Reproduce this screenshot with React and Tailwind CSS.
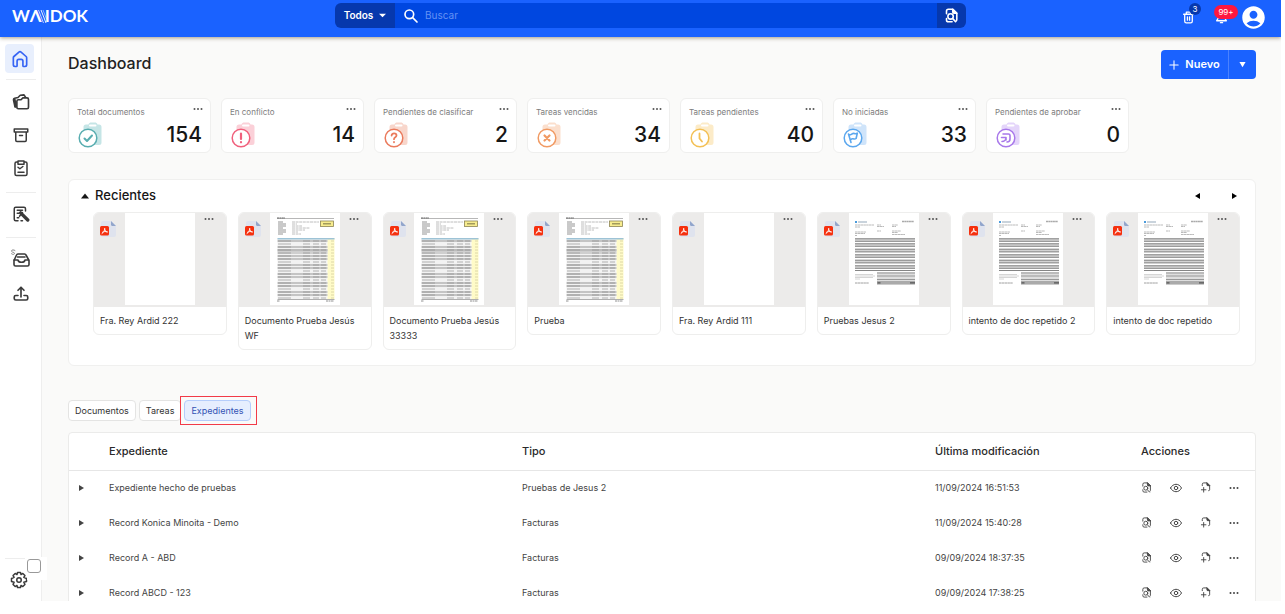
import React from 'react';
import { MdAccountCircle } from 'react-icons/md';

const STATS = [
  { label: 'Total documentos', value: 154, soft: '#c5e5e6', strong: '#58adb0', glyph: 'check' },
  { label: 'En conflicto', value: 14, soft: '#fbd0d8', strong: '#f0607c', glyph: 'alert' },
  { label: 'Pendientes de clasificar', value: 2, soft: '#f8d6cb', strong: '#ea7a5c', glyph: 'question' },
  { label: 'Tareas vencidas', value: 34, soft: '#fbdfcd', strong: '#f19a63', glyph: 'cross' },
  { label: 'Tareas pendientes', value: 40, soft: '#fcebc8', strong: '#f3c055', glyph: 'clock' },
  { label: 'No iniciadas', value: 33, soft: '#cfe4fa', strong: '#5ba7ee', glyph: 'flag' },
  { label: 'Pendientes de aprobar', value: 0, soft: '#e4d5fa', strong: '#a878ea', glyph: 'approve' },
];

const RECENTS = [
  { title: 'Fra. Rey Ardid 222', preview: 'blank' },
  { title: 'Documento Prueba Jesús WF', preview: 'order' },
  { title: 'Documento Prueba Jesús 33333', preview: 'order' },
  { title: 'Prueba', preview: 'order' },
  { title: 'Fra. Rey Ardid 111', preview: 'blank' },
  { title: 'Pruebas Jesus 2', preview: 'invoice' },
  { title: 'intento de doc repetido 2', preview: 'invoice' },
  { title: 'intento de doc repetido', preview: 'invoice' },
];

const RECORDS = [
  { name: 'Expediente hecho de pruebas', type: 'Pruebas de Jesus 2', modified: '11/09/2024 16:51:53' },
  { name: 'Record Konica Minoita - Demo', type: 'Facturas', modified: '11/09/2024 15:40:28' },
  { name: 'Record A - ABD', type: 'Facturas', modified: '09/09/2024 18:37:35' },
  { name: 'Record ABCD - 123', type: 'Facturas', modified: '09/09/2024 17:38:25' },
];

const GLYPHS = {
  check: <path d="M7.500 16.500l2.500 2.500 5-5.500" strokeWidth="2" />,
  alert: <path d="M11 11.500v5.500M11 20v.3" strokeWidth="2.2" />,
  question: <path d="M8.600 13.600c0-3 4.900-2.900 4.900 0 0 1.800-2.500 1.700-2.500 3.600M11 20v.3" strokeWidth="1.800" />,
  cross: <path d="M8.500 13.500l5 5M13.500 13.500l-5 5" strokeWidth="2.200" />,
  clock: <path d="M10.500 11.500v5l2.500 3" strokeWidth="1.800" />,
  flag: <path d="M6.500 12l2.500 8.500M6.800 12.500c2 1.500 3.500-2 5.500-1 1 .5 2 .3 3-.3l-1.200 5.300c-1 .8-2 .6-3 .3-1.500-.3-2 .5-3 1.200" strokeWidth="1.600" />,
  approve: <path d="M8 12h5.500a1.500 1.500 0 0 1 1.500 1.500V17a3 3 0 0 1-3 3M6.500 15.500H11V18M11 15.500c0 2-1.500 4-4 4" strokeWidth="1.600" />,
};

function Dots({ className = '' }) {
  return (
    <svg viewBox="0 0 10 4" className={`w-2.5 h-1 ${className}`} fill="currentColor">
      <circle cx="1.5" cy="2" r="1" />
      <circle cx="5" cy="2" r="1" />
      <circle cx="8.5" cy="2" r="1" />
    </svg>
  );
}

function Triangle({ points, className = 'w-2 h-2' }) {
  return (
    <svg viewBox="0 0 8 8" className={className} fill="currentColor">
      <polygon points={points} />
    </svg>
  );
}

function Stroke({ children, className = 'w-[18px] h-[18px]', width = 2 }) {
  return (
    <svg viewBox="0 0 24 24" className={className} fill="none" stroke="currentColor" strokeWidth={width} strokeLinecap="round" strokeLinejoin="round">
      {children}
    </svg>
  );
}

function PageSearchIcon({ className, width }) {
  return (
    <Stroke className={className} width={width}>
      <path d="M4 9V5a3 3 0 0 1 3-3h7l6.500 6.500V18a3 3 0 0 1-1 2.500" />
      <path d="M14 2v4.500a2 2 0 0 0 2 2h4.500z" fill="currentColor" />
      <circle cx="10.500" cy="13.500" r="4.300" />
      <path d="M14 17l4.500 5M4 17v2a3 3 0 0 0 3 3h6" />
    </Stroke>
  );
}

function StatIcon({ soft, strong, glyph }) {
  return (
    <svg viewBox="0 0 26 26" className="w-[26px] h-[26px]" fill="none">
      <path d="M9 2.500h2.500C12 1 13 .5 14 .5h4c1 0 2 .5 2.500 2H22a2.500 2.500 0 0 1 2.500 2.500v15.500A2.500 2.500 0 0 1 22 23H9a2.500 2.500 0 0 1-2.500-2.500V5A2.500 2.500 0 0 1 9 2.500z" fill={soft} />
      <rect x="12" y="2.500" width="7.500" height="2" rx="1" fill="#fff" />
      <circle cx="11" cy="16" r="8.800" fill="#fff" stroke={strong} strokeWidth="1.500" />
      <g stroke={strong} strokeLinecap="round" strokeLinejoin="round">{GLYPHS[glyph]}</g>
    </svg>
  );
}

function PdfIcon() {
  return (
    <svg viewBox="0 0 16 18" className="w-4 h-[18px]">
      <path d="M3 1h8l5 5v9a2 2 0 0 1-2 2H3a2 2 0 0 1-2-2V3a2 2 0 0 1 2-2z" fill="#dfe3ee" />
      <path d="M11 1l5 5h-3.500A1.500 1.500 0 0 1 11 4.500z" fill="#92a6cc" />
      <rect x="0" y="6" width="9" height="9.500" rx="1.500" fill="#f5300f" />
      <path d="M2 13.500c1.800-1 2.700-3 2.700-5.200C4.700 10.500 5.500 12 7.300 12M2.500 12.200c1.300-.7 3-.9 4.600-.4" stroke="#fff" strokeWidth=".9" fill="none" strokeLinecap="round" />
    </svg>
  );
}

function OrderPreview() {
  return (
    <svg viewBox="0 0 70 92" className="w-full h-full">
      <path d="M7 5.500h57" stroke="#a4a4a4" strokeWidth=".8" />
      <path d="M7 5h8" stroke="#666" strokeWidth="1" strokeDasharray="2 .4" />
      {[9, 11, 13, 15, 17, 19, 21].map((y, i) => (
        <g key={y} stroke="#888" strokeWidth=".9">
          <path d={`M8 ${y}h${i % 3 === 0 ? 5 : 8}`} />
          <path d={`M22 ${y}h${[27, 5, 10, 18, 13, 6, 9][i]}`} strokeDasharray="3 .6" strokeOpacity=".6" />
        </g>
      ))}
      <rect x="50.500" y="8" width="13" height="5.500" fill="#f7ec8e" stroke="#8c8454" strokeWidth=".8" />
      <path d="M53 10.800h8" stroke="#a29a5c" strokeWidth="1.500" />
      <rect x="7.500" y="25" width="50" height="61" fill="#f2f2f2" />
      <rect x="57.500" y="25" width="7" height="61" fill="#fffbc8" />
      <path d="M7.500 25.800h57" stroke="#9dc3d6" strokeWidth="1.600" />
      <rect x="7.500" y="36" width="50" height="5" fill="#cfcfcf" />
      {Array.from({ length: 20 }, (_, i) => 28 + i * 3).map((y, i) => (
        <g key={y}>
          {i % 3 !== 1 && <path d={`M7.500 ${y}h50`} stroke="#b4b4b4" strokeWidth="1.400" />}
          <path d={`M8 ${y}h13M33 ${y}h7M43 ${y}h6M51 ${y}h5`} stroke="#8c8c8c" strokeWidth=".8" strokeOpacity=".8" />
          <path d={`M61 ${y}h3`} stroke="#d4cfa0" strokeWidth=".8" />
        </g>
      ))}
      <path d="M7.500 86.500h57" stroke="#999" strokeWidth=".8" />
      <path d="M7 88h3M56 88h8" stroke="#777" strokeWidth=".8" strokeDasharray="2 .5" />
    </svg>
  );
}

function InvoicePreview() {
  return (
    <svg viewBox="0 0 70 92" className="w-full h-full">
      <rect x="6" y="8" width="2" height="2" fill="#4a9bdc" />
      <path d="M9 9h9" stroke="#93a8ba" strokeWidth="1.200" />
      <path d="M53 8.500h12" stroke="#aaa" strokeWidth="1.300" strokeDasharray="2 .3" />
      <path d="M6 12h19M28 12h4M28 13.500h7M43 12h6M43 13.500h4M6 14h5M28 18h4M6 19h11M6 20.500h10M43 18h9M43 19.500h6M43 21.500h13M6 22.500h2" stroke="#aaa" strokeWidth=".8" strokeDasharray="2.500 .3" />
      {[26, 31, 36.500, 42, 47.500, 53].map((y) => (
        <g key={y}>
          <rect x="6" y={y - 1} width="60" height="4" fill="#d3d3d3" />
          <path d={`M6 ${y - .2}h60M6 ${y + 2.300}h60`} stroke="#858585" strokeWidth=".9" />
        </g>
      ))}
      <path d="M6 57.500h60" stroke="#777" strokeWidth=".9" />
      <rect x="28" y="59" width="38" height="12.500" fill="#dedede" />
      <path d="M28 60h38M28 63h38M28 66.500h38" stroke="#909090" strokeWidth=".9" />
      <rect x="28" y="68" width="38" height="3.500" fill="#aaa" />
      <path d="M28.500 69.800h3M61 69.800h5" stroke="#555" strokeWidth="1.200" />
      <path d="M6 61.500h18M6 63h20M6 64.500h18M6 66h5" stroke="#ccc" strokeWidth=".8" />
      <path d="M6 70h14" stroke="#a0a0a0" strokeWidth="1" strokeDasharray="2.500 .3" />
    </svg>
  );
}

function StatCard({ stat }) {
  return (
    <article className="w-[143px] h-[55px] shrink-0 rounded-md border border-[#efefee] bg-white px-2">
      <div className="flex items-start justify-between">
        <h2 className="pt-[7px] text-[8px] leading-3 text-[#7d7d7d]">{stat.label}</h2>
        <button aria-label="Opciones" className="pt-2 text-[#555]"><Dots className="-mr-px" /></button>
      </div>
      <div className="mt-1 flex items-center justify-between">
        <StatIcon soft={stat.soft} strong={stat.strong} glyph={stat.glyph} />
        <span className="text-[21px] leading-6 font-medium text-[#161616]">{stat.value}</span>
      </div>
    </article>
  );
}

function RecentCard({ doc }) {
  return (
    <article className="flex-1 min-w-0 overflow-hidden rounded-md border border-[#eeeeed] bg-white">
      <div className="relative flex h-[94px] justify-center bg-[#ecebea]">
        <div className="h-[92px] w-[70px] bg-white">
          {doc.preview === 'order' && <OrderPreview />}
          {doc.preview === 'invoice' && <InvoicePreview />}
        </div>
        <div className="absolute left-1.5 top-[7px]"><PdfIcon /></div>
        <button aria-label="Opciones" className="absolute right-3 top-1 text-[#555] flex"><Dots /></button>
      </div>
      <h3 className="px-1.5 pt-[6px] pb-[6px] text-[9px] leading-[15px] text-[#333]">{doc.title}</h3>
    </article>
  );
}

function Sidebar() {
  return (
    <nav className="relative flex w-[42px] shrink-0 flex-col border-r border-[#eeeeee] bg-white text-[#3a3a3a]">
      <a href="#inicio" aria-label="Inicio" className="ml-[5px] mt-[7px] flex size-[29px] items-center justify-center rounded bg-[#e8effd] text-[#3664f4]">
        <Stroke className="size-5" width={2}>
          <path d="M4 10.500a2 2 0 0 1 .7-1.500l6-5.300a2 2 0 0 1 2.600 0l6 5.300a2 2 0 0 1 .7 1.500V19a2 2 0 0 1-2 2h-1.500a1 1 0 0 1-1-1v-5.500a2 2 0 0 0-2-2h-3a2 2 0 0 0-2 2V20a1 1 0 0 1-1 1H6a2 2 0 0 1-2-2z" />
        </Stroke>
      </a>
      <hr className="ml-1.5 mt-1.5 w-[30px] border-[#ededed]" />
      <div className="flex flex-col gap-[15px] pl-3 pt-[13px]">
        <a href="#carpetas" aria-label="Carpetas">
          <Stroke width={2.2}>
            <path d="M6.500 11a2 2 0 0 1 2-2h3.500l2.500-2.500H20a2 2 0 0 1 2 2V19a2 2 0 0 1-2 2H8.500a2 2 0 0 1-2-2z" />
            <path d="M4 18.500L2 9a2 2 0 0 1 1.500-2L8 6l3-3 5-.5 2 3" />
            <path d="M3.500 9l1.500 9" strokeWidth="3" />
          </Stroke>
        </a>
        <a href="#archivo" aria-label="Archivo">
          <Stroke>
            <path d="M3 4h18v4H3zM5 8v11a1.500 1.500 0 0 0 1.500 1.500h11A1.500 1.500 0 0 0 19 19V8M10 12.500h4" />
          </Stroke>
        </a>
        <a href="#tareas" aria-label="Tareas">
          <Stroke>
            <path d="M8 4H6a2 2 0 0 0-2 2v14a2 2 0 0 0 2 2h12a2 2 0 0 0 2-2V6a2 2 0 0 0-2-2h-2M8 2.500h8V7H8z" />
            <path d="M8 11l2.500 2 4-3M8 17.500h8" />
          </Stroke>
        </a>
      </div>
      <hr className="ml-1.5 mt-[15px] w-[30px] border-[#ededed]" />
      <a href="#revision" aria-label="Revisión" className="ml-3 mt-3">
        <Stroke>
          <path d="M8 21H5a2 2 0 0 1-2-2V5a2 2 0 0 1 2-2h11a2 2 0 0 1 2 2v3M7 7h7M7 11h2M7 17h2M12 21h2" />
          <path d="M11.500 10.500L21 20" strokeWidth="4.500" />
          <path d="M10 15l4-5" />
        </Stroke>
      </a>
      <hr className="ml-1.5 mt-[14px] w-[30px] border-[#ededed]" />
      <a href="#bandeja" aria-label="Bandeja" className="ml-2 mt-2.5">
        <svg viewBox="0 0 24 22" className="h-[22px] w-6" fill="none" stroke="currentColor" strokeWidth="1.600" strokeLinecap="round" strokeLinejoin="round">
          <path d="M6 12.500l2.500-5.500a1.500 1.500 0 0 1 1.500-1h6.500a1.500 1.500 0 0 1 1.500 1l3 5.500v4A1.500 1.500 0 0 1 19.500 18h-12A1.500 1.500 0 0 1 6 16.500z" />
          <path d="M6 12h4c.5 3 6.500 3 7 0h3.500M9.500 9h7.500" />
          <path d="M7 2.500c-1.500-1.200-4-.5-3.500.8.5 1.200 3 .7 3 2.200 0 1-2 1.300-3 .3" strokeWidth="1" stroke="#888" />
        </svg>
      </a>
      <a href="#subir" aria-label="Subir" className="ml-3 mt-[15px]">
        <Stroke width={2.2}>
          <path d="M12 16V3M8 7l4-4 4 4M8 14H5a2 2 0 0 0-2 2v2a2 2 0 0 0 2 2h14a2 2 0 0 0 2-2v-2a2 2 0 0 0-2-2h-3" />
        </Stroke>
      </a>
      <hr className="ml-[5px] mt-auto w-5 border-[#ededed]" />
      <a href="#ajustes" aria-label="Ajustes" className="ml-2.5 mt-3 mb-3">
        <Stroke>
          <path d="M10 2h4l.7 2.700 2.400-1.400 2.800 2.800-1.500 2.400L22 10v4l-3.600 1 1.500 2.900-2.800 2.800-2.400-1.400L14 22h-4l-.7-2.700-2.400 1.400-2.800-2.800L5.500 15 2 14v-4l3.500-1.500-1.400-2.400 2.800-2.800 2.400 1.400z" />
          <circle cx="12" cy="12" r="3" />
        </Stroke>
      </a>
      {/* Pin toggle hangs over the sidebar edge */}
      <label className="absolute bottom-[21px] left-[27px] z-10 flex h-[23px] w-5 items-start bg-white pt-0.5">
        <input type="checkbox" aria-label="Fijar menú" className="size-3.5 appearance-none rounded-[3px] border border-[#999] bg-white" />
      </label>
    </nav>
  );
}

function Header() {
  return (
    <header className="relative z-20 flex h-[37px] shrink-0 bg-[#1a62ff] text-white shadow-[0_1px_4px_rgba(60,40,0,0.45)]">
      <a href="#inicio" aria-label="Waidok" className="flex h-8 w-[335px] shrink-0 items-center pl-3 font-['Lato',sans-serif] text-[17px] font-bold">
        <span>WΛ</span>
        <svg viewBox="0 0 9 13" className="-ml-1 h-[13px] w-[9px]" fill="none" stroke="#fff">
          <path d="M.5 0l5 13" strokeWidth=".7" />
          <path d="M3 0l5 13" strokeWidth=".9" />
          <path d="M5 0l3.500 9" strokeWidth=".5" />
        </svg>
        <span className="-ml-0.5">IDOK</span>
      </a>
      <form className="mt-[3px] flex h-[25px] flex-1" onSubmit={e => e.preventDefault()}>
        <button type="button" className="flex w-[60px] items-center justify-center gap-1.5 rounded-l-md bg-[#0638ad] text-[10px] font-semibold">
          Todos <Triangle points="0,2 8,2 4,6" className="size-[7px]" />
        </button>
        <label className="flex flex-1 items-center gap-1.5 bg-[#0047e0] pl-2">
          <Stroke className="size-4" width={2.5}>
            <circle cx="9.500" cy="9.500" r="6.500" />
            <path d="M14.500 14.500l6.500 6.500" />
          </Stroke>
          <input type="search" aria-label="Buscar" placeholder="Buscar" className="min-w-0 flex-1 bg-transparent text-[10px] outline-none placeholder:text-[#6592f4]" />
        </label>
        <button aria-label="Buscar en documentos" className="flex w-[29px] items-center justify-center rounded-r-md bg-[#0638ad]">
          <PageSearchIcon className="size-[15px]" width={2.5} />
        </button>
      </form>
      <div className="flex w-[315px] shrink-0 items-start justify-end pr-[14px]">
        <button aria-label="Papelera" className="relative mt-[11px] mr-5 flex">
          <Stroke className="size-[13px]" width={2.4}>
            <path d="M3 6h18M8 5V2h8v3M5 7v12a3 3 0 0 0 3 3h8a3 3 0 0 0 3-3V7M10 11v6M14 11v6" />
          </Stroke>
          <span className="absolute -top-2 left-[7px] flex size-3 items-center justify-center rounded-full bg-[#0638ad] text-[8px] leading-3">3</span>
        </button>
        <button aria-label="Notificaciones" className="relative mt-[11px] mr-3 flex">
          <Stroke className="size-[13px]" width={2.4}>
            <path d="M12 2a6 6 0 0 0-6 6v5l-3 5h18l-3-5V8a6 6 0 0 0-6-6zM10 21.500h4" />
          </Stroke>
          <span className="absolute -top-[6px] -left-px flex h-[14px] w-6 items-center justify-center rounded-[7px] bg-[#ff173f] text-[8px]">99+</span>
        </button>
        <button aria-label="Cuenta" className="mt-1 flex"><MdAccountCircle className="size-[27px]" /></button>
      </div>
    </header>
  );
}

export default function App() {
  return (
    <div className="h-screen bg-white pr-1 pb-[13px] font-['Inter',sans-serif]">
      <div className="flex h-full flex-col overflow-hidden bg-[#fafaf9]">
        <Header />
        <div className="flex min-h-0 flex-1">
          <Sidebar />
          <main className="min-w-0 flex-1 overflow-hidden pl-[26px] pr-[25px]">
            <div className="flex items-start justify-between pt-[13px]">
              <h1 className="pt-px text-[16px] leading-6 font-medium text-[#222]">Dashboard</h1>
              <div className="flex h-[29px] overflow-hidden rounded bg-[#1a62ff] text-white">
                <button className="flex w-[67px] items-center justify-center gap-1.5 text-[11px] font-semibold">
                  <Stroke className="size-2.5" width={2.5}><path d="M12 2v20M2 12h20" /></Stroke>
                  Nuevo
                </button>
                <button aria-label="Más opciones" className="flex w-7 items-center justify-center border-l border-[#4a82ff]">
                  <Triangle points="0.500,1 7.500,1 4,7" className="size-[7px]" />
                </button>
              </div>
            </div>

            {/* Counters */}
            <section className="mt-[19px] flex gap-2.5">
              {STATS.map(stat => <StatCard key={stat.label} stat={stat} />)}
            </section>

            {/* Recent documents */}
            <section className="mt-[26px] h-[187px] rounded-md border border-[#f0f0ef] bg-white pl-6 pr-[15px]">
              <div className="-ml-3 flex h-8 items-center">
                <button className="flex items-center gap-1.5 text-[13px] font-medium text-[#161616]">
                  <Triangle points="4,1.500 8,6.500 0,6.500" />
                  Recientes
                </button>
                <button aria-label="Anterior" className="ml-auto"><Triangle points="6,1 6,7 1,4" /></button>
                <button aria-label="Siguiente" className="ml-7 mr-0.5"><Triangle points="2,1 2,7 7,4" /></button>
              </div>
              <div className="flex items-start gap-[11px]">
                {RECENTS.map(doc => <RecentCard key={doc.title} doc={doc} />)}
              </div>
            </section>

            {/* Tabs */}
            <div className="mt-[34px] flex h-[21px] gap-[3px] text-[9px] text-[#333]">
              <button className="rounded border border-[#e4e4e3] bg-white px-1.5">Documentos</button>
              <button className="rounded border border-[#e4e4e3] bg-white px-1.5">Tareas</button>
              <div className="relative flex">
                <button className="rounded border border-[#b5cdfb] bg-[#e6eefe] px-1.5 text-[#3453b4]">Expedientes</button>
                <div className="pointer-events-none absolute -left-1 -right-1.5 -inset-y-1 border border-[#f23a48]" />
              </div>
            </div>

            <div className="mt-[11px] rounded-t border border-[#ebebea] bg-white">
              <table className="w-full table-fixed text-left">
                <thead>
                  <tr className="h-[37px] border-b border-[#e6e6e6] text-[11px] text-[#2a2a2a]">
                    <th className="w-10" aria-label="Desplegar" />
                    <th className="font-medium">Expediente</th>
                    <th className="font-medium">Tipo</th>
                    <th className="w-[206px] font-medium">Última modificación</th>
                    <th className="w-[114px] font-medium">Acciones</th>
                  </tr>
                </thead>
                <tbody>
                  {RECORDS.map(record => (
                    <tr key={record.name} className="h-[35px] text-[9px] text-[#444]">
                      <td className="pl-2"><button aria-label="Desplegar" className="flex"><Triangle points="2,1 2,7 7,4" /></button></td>
                      <td>{record.name}</td>
                      <td>{record.type}</td>
                      <td>{record.modified}</td>
                      <td>
                        <div className="flex items-center gap-[18px]">
                          <button aria-label="Ver documentos"><PageSearchIcon className="size-[11px]" width={2} /></button>
                          <button aria-label="Ver">
                            <Stroke className="size-3" width={2}>
                              <path d="M1 12c5-10 17-10 22 0-5 10-17 10-22 0z" />
                              <circle cx="12" cy="12" r="3.500" />
                            </Stroke>
                          </button>
                          <button aria-label="Añadir documento">
                            <Stroke className="size-[11px]" width={2}>
                              <path d="M5 8V5a3 3 0 0 1 3-3h7l6 6v9a2 2 0 0 1-2 2M8 12v10M3 17h10" />
                              <path d="M15 2v4a2 2 0 0 0 2 2h4z" fill="currentColor" />
                            </Stroke>
                          </button>
                          <button aria-label="Más"><Dots /></button>
                        </div>
                      </td>
                    </tr>
                  ))}
                </tbody>
              </table>
            </div>
          </main>
        </div>
      </div>
    </div>
  );
}
